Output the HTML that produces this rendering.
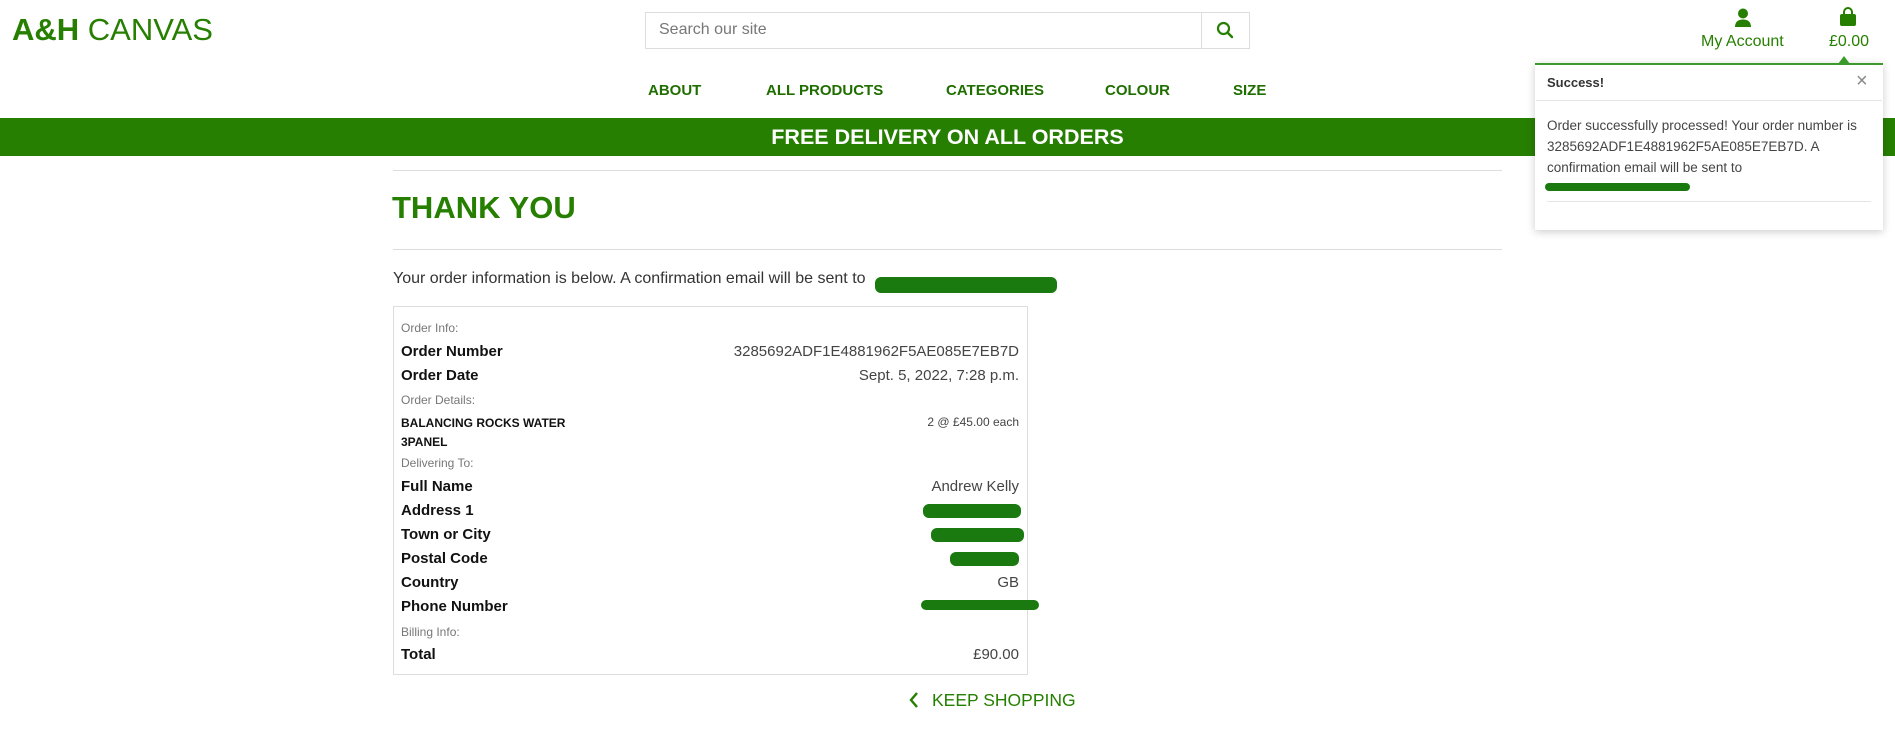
<!DOCTYPE html>
<html><head><meta charset="utf-8"><style>
*{margin:0;padding:0;box-sizing:border-box}
body{width:1895px;height:738px;overflow:hidden;background:#fff;font-family:"Liberation Sans",sans-serif;position:relative;color:#222}
.a{position:absolute;white-space:nowrap}
.g{color:#267f00}
.nav{font-weight:bold;font-size:15px;color:#1f6e00;top:82px}
.lab{left:401px;font-weight:bold;font-size:15px;color:#111}
.sm{left:401px;font-size:12px;color:#777}
.val{right:876px;font-size:15px;color:#444;text-align:right}
.scr{position:absolute;height:12px;background:#1a7a10;border-radius:6px}
</style></head><body>
<div class="a g" style="left:12px;top:12px;font-size:31px;"><b>A&amp;H</b> CANVAS</div>
<div class="a" style="left:645px;top:12px;width:605px;height:37px;border:1px solid #ddd"></div>
<div class="a" style="left:1201px;top:12px;width:1px;height:37px;background:#ddd"></div>
<div class="a" style="left:659px;top:21px;font-size:16px;color:#777">Search our site</div>
<svg class="a" style="left:1216px;top:21px" width="18" height="18" viewBox="0 0 18 18"><circle cx="7.5" cy="7.5" r="5.5" fill="none" stroke="#267f00" stroke-width="2.2"/><line x1="11.5" y1="11.5" x2="16" y2="16" stroke="#267f00" stroke-width="2.4" stroke-linecap="round"/></svg>
<svg class="a" style="left:1734px;top:8px" width="18" height="20" viewBox="0 0 18 20"><circle cx="9" cy="5.5" r="5" fill="#267f00"/><path d="M1 19c0-5 3-7.5 8-7.5s8 2.5 8 7.5z" fill="#267f00"/></svg>
<div class="a g" style="left:1701px;top:33px;font-size:16px">My Account</div>
<svg class="a" style="left:1839px;top:7px" width="18" height="20" viewBox="0 0 18 20"><path d="M5 7V5a4 4 0 0 1 8 0v2" fill="none" stroke="#267f00" stroke-width="2"/><rect x="1" y="7" width="16" height="12" rx="2" fill="#267f00"/></svg>
<div class="a g" style="left:1829px;top:33px;font-size:16px">£0.00</div>
<div class="a nav" style="left:648px">ABOUT</div>
<div class="a nav" style="left:766px">ALL PRODUCTS</div>
<div class="a nav" style="left:946px">CATEGORIES</div>
<div class="a nav" style="left:1105px">COLOUR</div>
<div class="a nav" style="left:1233px">SIZE</div>
<div class="a" style="left:0;top:118px;width:1895px;height:38px;background:#267f00;color:#fff;font-weight:bold;font-size:21.5px;text-align:center;line-height:38px">FREE DELIVERY ON ALL ORDERS</div>
<div class="a" style="left:393px;top:170px;width:1109px;height:1px;background:#ddd"></div>
<div class="a g" style="left:392px;top:190px;font-size:31px;font-weight:bold">THANK YOU</div>
<div class="a" style="left:393px;top:249px;width:1109px;height:1px;background:#ddd"></div>
<div class="a" style="left:393px;top:270px;font-size:16px;color:#333">Your order information is below. A confirmation email will be sent to</div>
<div class="scr" style="left:875px;top:277px;width:182px;height:16px"></div>
<div class="a" style="left:393px;top:306px;width:635px;height:369px;border:1px solid #ddd"></div>
<div class="a sm" style="top:321px">Order Info:</div>
<div class="a lab" style="top:343px">Order Number</div><div class="a val" style="top:343px">3285692ADF1E4881962F5AE085E7EB7D</div>
<div class="a lab" style="top:367px">Order Date</div><div class="a val" style="top:367px">Sept. 5, 2022, 7:28 p.m.</div>
<div class="a sm" style="top:393px">Order Details:</div>
<div class="a lab" style="top:414px;font-size:12px;line-height:19px">BALANCING ROCKS WATER<br>3PANEL</div>
<div class="a val" style="top:415px;font-size:12px">2 @ £45.00 each</div>
<div class="a sm" style="top:456px">Delivering To:</div>
<div class="a lab" style="top:478px">Full Name</div><div class="a val" style="top:478px">Andrew Kelly</div>
<div class="a lab" style="top:502px">Address 1</div><div class="scr" style="left:923px;top:504px;width:98px;height:14px"></div>
<div class="a lab" style="top:526px">Town or City</div><div class="scr" style="left:931px;top:528px;width:93px;height:14px"></div>
<div class="a lab" style="top:550px">Postal Code</div><div class="scr" style="left:950px;top:552px;width:69px;height:14px"></div>
<div class="a lab" style="top:574px">Country</div><div class="a val" style="top:574px">GB</div>
<div class="a lab" style="top:598px">Phone Number</div><div class="scr" style="left:921px;top:600px;width:118px;height:10px"></div>
<div class="a sm" style="top:625px">Billing Info:</div>
<div class="a lab" style="top:646px">Total</div><div class="a val" style="top:646px">£90.00</div>
<svg class="a" style="left:908px;top:691px" width="12" height="18" viewBox="0 0 12 18"><path d="M9 2L3 9l6 7" fill="none" stroke="#267f00" stroke-width="2.4"/></svg>
<div class="a g" style="left:932px;top:690px;font-size:17.5px">KEEP SHOPPING</div>
<div class="a" style="left:1535px;top:63px;width:348px;height:167px;background:#fff;border-top:2px solid #3a9a2a;box-shadow:0 2px 8px rgba(0,0,0,.2)"></div>
<svg class="a" style="left:1838px;top:55px" width="12" height="9" viewBox="0 0 12 9"><path d="M0 9L6 1l6 8z" fill="#3a9a2a"/></svg>
<div class="a" style="left:1547px;top:75px;font-size:13px;font-weight:bold;color:#333">Success!</div>
<div class="a" style="left:1856px;top:70px;font-size:20px;color:#888">×</div>
<div class="a" style="left:1536px;top:100px;width:346px;height:1px;background:#e5e5e5"></div>
<div class="a" style="left:1547px;top:115px;font-size:13.5px;line-height:21px;color:#444">Order successfully processed! Your order number is<br>3285692ADF1E4881962F5AE085E7EB7D. A<br>confirmation email will be sent to</div>
<div class="scr" style="left:1545px;top:183px;width:145px;height:8px"></div>
<div class="a" style="left:1547px;top:201px;width:324px;height:1px;background:#e5e5e5"></div>
</body></html>
